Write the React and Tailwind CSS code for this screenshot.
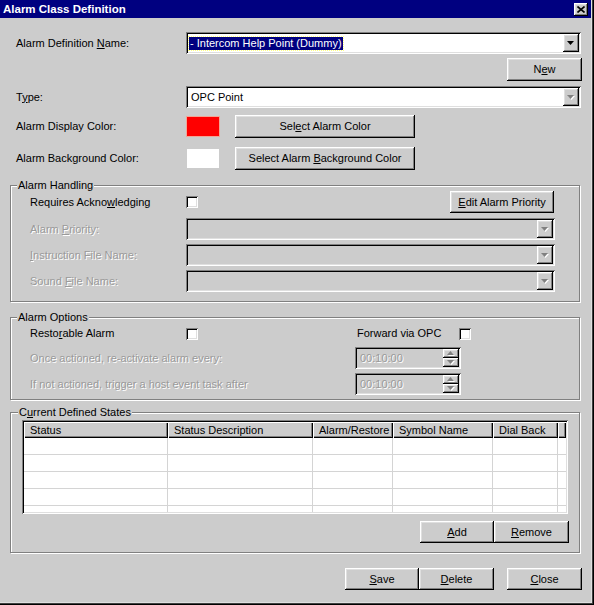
const S = "shadow-[inset_1px_1px_#808080,inset_-1px_-1px_#ffffff,inset_2px_2px_#000000,inset_-2px_-2px_#dfdfdf]";
const R = "shadow-[inset_-1px_-1px_#000000,inset_1px_1px_#ffffff,inset_-2px_-2px_#808080,inset_2px_2px_#dfdfdf]";
const DIS = "text-[#9a9a9a] [text-shadow:1px_1px_0_#ffffff]";
const GROUP = "relative ml-[10px] w-[570px] border border-[#808080] shadow-[inset_1px_1px_#ffffff,1px_1px_#ffffff]";

function Btn({ className, children }) {
  return (
    <div className={`${R} bg-[#cccccc] flex items-center justify-center whitespace-nowrap ${className}`}>
      <span>{children}</span>
    </div>
  );
}

function Arrow({ disabled, up }) {
  const d = up ? "M3.5 0L7 4H0z" : "M0 0h7L3.5 4z";
  return (
    <svg width="8" height="5" viewBox="0 0 8 5">
      {disabled && <path d={d} transform="translate(1 1)" fill="#ffffff" />}
      <path d={d} fill={disabled ? "#808080" : "#000000"} />
    </svg>
  );
}

function Combo({ className, bg, disabled, children }) {
  return (
    <div className={`${S} ${bg} flex items-stretch p-[2px] ${className}`}>
      <div className="flex-1 flex items-center overflow-hidden whitespace-nowrap">{children}</div>
      <div className={`${R} bg-[#cccccc] w-[16px] flex items-center justify-center`}>
        <Arrow disabled={disabled} />
      </div>
    </div>
  );
}

function Check() {
  return <div className={`${S} bg-white w-[12px] h-[12px] shrink-0`} />;
}

function Spin() {
  return (
    <div className={`${S} bg-[#cccccc] w-[106px] h-[22px] flex p-[2px]`}>
      <div className={`flex-1 flex items-center pl-[3px] ${DIS}`}>00:10:00</div>
      <div className="w-[16px] flex flex-col">
        <div className={`${R} flex-1 flex items-center justify-center`}>
          <Arrow disabled up />
        </div>
        <div className={`${R} flex-1 flex items-center justify-center`}>
          <Arrow disabled />
        </div>
      </div>
    </div>
  );
}

const COLS = [
  { w: "w-[144px]", t: "Status" },
  { w: "w-[145px]", t: "Status Description" },
  { w: "w-[80px]", t: "Alarm/Restore" },
  { w: "w-[100px]", t: "Symbol Name" },
  { w: "w-[65px]", t: "Dial Back" },
  { w: "w-[8px]", t: "" },
];

export default function App() {
  return (
    <div className="w-[594px] h-[605px] bg-[#cccccc] overflow-hidden text-[11px] leading-[13px] text-black font-['Liberation_Sans',Arial,sans-serif] shadow-[inset_-1px_-1px_#000000,inset_-2px_-2px_#404040,inset_-3px_-3px_#dfdfdf]">
      {/* Title bar */}
      <div className="h-[18px] w-[591px] bg-[#000080] flex items-center justify-between pl-[3px] pr-[3px]">
        <span className="text-white font-bold text-[11.5px]">Alarm Class Definition</span>
        <div className={`${R} bg-[#cccccc] w-[14px] h-[13px] flex items-center justify-center`}>
          <svg width="8" height="7" viewBox="0 0 8 7">
            <path d="M0.5 0.5L7.5 6.5M7.5 0.5L0.5 6.5" stroke="#000" strokeWidth="1.6" />
          </svg>
        </div>
      </div>

      <div className="flex flex-col">
        {/* Name */}
        <div className="mt-[14px] h-[22px] flex items-center">
          <div className="w-[186px] pl-[16px]">
            Alarm Definition <span className="underline">N</span>ame:
          </div>
          <Combo className="w-[395px] h-[22px]" bg="bg-white">
            <span className="ml-[1px] bg-[#000080] text-white px-[1px] outline outline-1 outline-dotted outline-[#ffff80]">
              - Intercom Help Point (Dummy)
            </span>
          </Combo>
        </div>
        <Btn className="mt-[4px] ml-[507px] w-[75px] h-[23px]">
          N<span className="underline">e</span>w
        </Btn>

        {/* Type */}
        <div className="mt-[5px] h-[22px] flex items-center">
          <div className="w-[186px] pl-[16px]">
            T<span className="underline">y</span>pe:
          </div>
          <Combo className="w-[395px] h-[22px]" bg="bg-white" disabled>
            <span className="pl-[3px]">OPC Point</span>
          </Combo>
        </div>

        {/* Display color */}
        <div className="mt-[7px] h-[23px] flex items-center">
          <div className="w-[187px] pl-[16px]">Alarm Display Color:</div>
          <div className="w-[32px] h-[19px] bg-[#ff0000] shadow-[0_0_0_1px_#f3a595]" />
          <Btn className="ml-[16px] w-[180px] h-[23px]">
            Sel<span className="underline">e</span>ct Alarm Color
          </Btn>
        </div>

        {/* Background color */}
        <div className="mt-[9px] h-[23px] flex items-center">
          <div className="w-[187px] pl-[16px]">Alarm Background Color:</div>
          <div className="w-[32px] h-[19px] bg-white" />
          <Btn className="ml-[16px] w-[180px] h-[23px]">
            Select Alarm <span className="underline">B</span>ackground Color
          </Btn>
        </div>

        {/* Alarm Handling */}
        <div className={`${GROUP} mt-[15px] h-[117px] pt-[5px]`}>
          <span className="absolute left-[6px] -top-[8px] bg-[#cccccc] px-[1px] leading-[14px]">Alarm Handling</span>
          <div className="h-[22px] flex items-center">
            <div className="w-[175px] pl-[19px]">
              Requires Ackno<span className="underline">w</span>ledging
            </div>
            <Check />
            <Btn className="ml-[252px] w-[104px] h-[22px]">
              <span className="underline">E</span>dit Alarm Priority
            </Btn>
          </div>
          <div className="mt-[5px] h-[22px] flex items-center">
            <div className={`w-[175px] pl-[19px] ${DIS}`}>
              Alarm <span className="underline">P</span>riority:
            </div>
            <Combo className="w-[369px] h-[22px]" bg="bg-[#cccccc]" disabled />
          </div>
          <div className="mt-[4px] h-[22px] flex items-center">
            <div className={`w-[175px] pl-[19px] ${DIS}`}>
              <span className="underline">I</span>nstruction File Name:
            </div>
            <Combo className="w-[369px] h-[22px]" bg="bg-[#cccccc]" disabled />
          </div>
          <div className="mt-[4px] h-[22px] flex items-center">
            <div className={`w-[175px] pl-[19px] ${DIS}`}>
              Sound <span className="underline">F</span>ile Name:
            </div>
            <Combo className="w-[369px] h-[22px]" bg="bg-[#cccccc]" disabled />
          </div>
        </div>

        {/* Alarm Options */}
        <div className={`${GROUP} mt-[15px] h-[83px] pt-[9px]`}>
          <span className="absolute left-[6px] -top-[8px] bg-[#cccccc] px-[1px] leading-[14px]">Alarm Options</span>
          <div className="h-[13px] flex items-center">
            <div className="w-[175px] pl-[19px]">
              Resto<span className="underline">r</span>able Alarm
            </div>
            <Check />
            <div className="ml-[159px] w-[102px]">Forward via OPC</div>
            <Check />
          </div>
          <div className="mt-[7px] h-[22px] flex items-center">
            <div className={`w-[344px] pl-[19px] ${DIS}`}>Once actioned, re-activate alarm every:</div>
            <Spin />
          </div>
          <div className="mt-[4px] h-[22px] flex items-center">
            <div className={`w-[344px] pl-[19px] ${DIS}`}>If not actioned, trigger a host event task after</div>
            <Spin />
          </div>
        </div>

        {/* Current Defined States */}
        <div className={`${GROUP} mt-[12px] h-[141px] pt-[7px]`}>
          <span className="absolute left-[7px] -top-[8px] bg-[#cccccc] px-[1px] leading-[14px]">
            C<span className="underline">u</span>rrent Defined States
          </span>
          <div className={`${S} bg-white ml-[11px] w-[546px] h-[94px] p-[2px]`}>
            <div className="h-full overflow-hidden flex flex-col">
              <div className="flex h-[16px] shrink-0 bg-[#cccccc]">
                {COLS.map((c, i) => (
                  <div
                    key={i}
                    className={`${c.w} shrink-0 h-full flex items-center pl-[6px] whitespace-nowrap shadow-[inset_1px_1px_#ffffff,inset_-1px_-1px_#000000,inset_-2px_-2px_#808080]`}
                  >
                    {c.t}
                  </div>
                ))}
              </div>
              {[0, 1, 2, 3, 4].map((r) => (
                <div key={r} className="flex h-[17px] shrink-0 border-b border-[#d4d4d4]">
                  {COLS.map((c, i) => (
                    <div key={i} className={`${c.w} shrink-0 h-full ${i < 5 ? "border-r border-[#d4d4d4]" : ""}`} />
                  ))}
                </div>
              ))}
            </div>
          </div>
          <div className="mt-[7px] ml-[409px] flex">
            <Btn className="w-[74px] h-[22px]">
              <span className="underline">A</span>dd
            </Btn>
            <Btn className="w-[75px] h-[22px]">
              <span className="underline">R</span>emove
            </Btn>
          </div>
        </div>

        {/* Bottom buttons */}
        <div className="mt-[15px] ml-[345px] flex">
          <Btn className="w-[74px] h-[22px]">
            <span className="underline">S</span>ave
          </Btn>
          <Btn className="w-[75px] h-[22px]">
            <span className="underline">D</span>elete
          </Btn>
          <Btn className="ml-[13px] w-[75px] h-[22px]">
            <span className="underline">C</span>lose
          </Btn>
        </div>
      </div>
    </div>
  );
}
